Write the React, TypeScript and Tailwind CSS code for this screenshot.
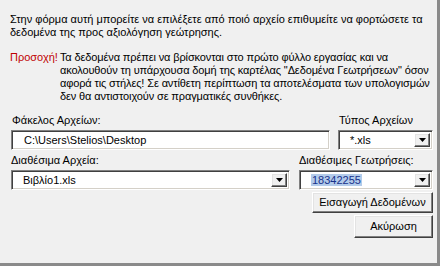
import React from "react";

const font = { fontFamily: "'Liberation Sans', Arial, sans-serif" };

const sunken =
  "border border-t-[#808080] border-l-[#808080] border-b-white border-r-white shadow-[inset_1px_1px_0_#404040,inset_-1px_-1px_0_#d4d0c8] bg-white";

const raised =
  "border border-t-white border-l-white border-r-[#404040] border-b-[#404040] shadow-[inset_-1px_-1px_0_#808080,inset_1px_1px_0_#e3e3e3] bg-[#f0f0f0]";

const Arrow = () => (
  <div className={`${raised} flex h-full w-[16px] shrink-0 items-center justify-center`}>
    <svg width="7" height="4" viewBox="0 0 7 4">
      <path d="M0 0h7L3.5 4z" fill="#000" />
    </svg>
  </div>
);

const Combo = ({ value, selected }: { value: string; selected?: boolean }) => (
  <div className={`${sunken} flex h-[20px] items-center p-[2px]`}>
    <div className="flex-1 pl-[9px] text-[11px] leading-[13px]">
      {selected ? <span className="bg-[#b3cbea] px-[1px] text-[#17318a]">{value}</span> : value}
    </div>
    <Arrow />
  </div>
);

const App = () => {
  return (
    <div
      className="flex h-[266px] w-[440px] flex-col border-b-[3px] border-r-[3px] border-[#8a8a8a] bg-[#f0f0f0] text-[11px] leading-[13px] text-black"
      style={font}
    >
      {/* Intro */}
      <p className="whitespace-nowrap pl-[10px] pt-[13px]">
        Στην φόρμα αυτή μπορείτε να επιλέξετε από ποιό αρχείο επιθυμείτε να φορτώσετε τα
        <br />
        δεδομένα της προς αξιολόγηση γεώτρησης.
      </p>

      {/* Warning */}
      <div className="mt-[12px] flex gap-[2px] whitespace-nowrap pl-[10px]">
        <span className="text-[#c00000]">Προσοχή!</span>
        <p className="tracking-[-0.12px]">
          Τα δεδομένα πρέπει να βρίσκονται στο πρώτο φύλλο εργασίας και να
          <br />
          ακολουθούν τη υπάρχουσα δομή της καρτέλας "Δεδομένα Γεωτρήσεων" όσον
          <br />
          αφορά τις στήλες! Σε αντίθετη περίπτωση τα αποτελέσματα των υπολογισμών
          <br />
          δεν θα αντιστοιχούν σε πραγματικές συνθήκες.
        </p>
      </div>

      {/* Folder + type */}
      <div className="mt-[11px] flex gap-[8px] pl-[11px]">
        <div className="flex w-[319px] flex-col gap-[3px]">
          <span className="pl-[1px]">Φάκελος Αρχείων:</span>
          <div className={`${sunken} flex h-[20px] items-center pl-[12px]`}>C:\Users\Stelios\Desktop</div>
        </div>
        <div className="flex w-[95px] flex-col gap-[3px]">
          <span className="pl-[1px]">Τύπος Αρχείων</span>
          <Combo value="*.xls" />
        </div>
      </div>

      {/* Files + wells */}
      <div className="mt-[4px] flex gap-[9px] pl-[11px]">
        <div className="flex w-[279px] flex-col gap-[3px]">
          <span>Διαθέσιμα Αρχεία:</span>
          <Combo value="Βιβλίο1.xls" />
        </div>
        <div className="flex w-[134px] flex-col gap-[3px]">
          <span>Διαθέσιμες Γεωτρήσεις:</span>
          <Combo value="18342255" selected />
        </div>
      </div>

      {/* Buttons */}
      <div className="mt-[2px] flex flex-col items-end gap-[2px] pr-[4px]">
        <button className={`${raised} h-[21px] w-[121px] text-[11px]`}>Εισαγωγή Δεδομένων</button>
        <button className={`${raised} h-[23px] w-[79px] text-[11px]`}>Ακύρωση</button>
      </div>
    </div>
  );
};

export default App;
